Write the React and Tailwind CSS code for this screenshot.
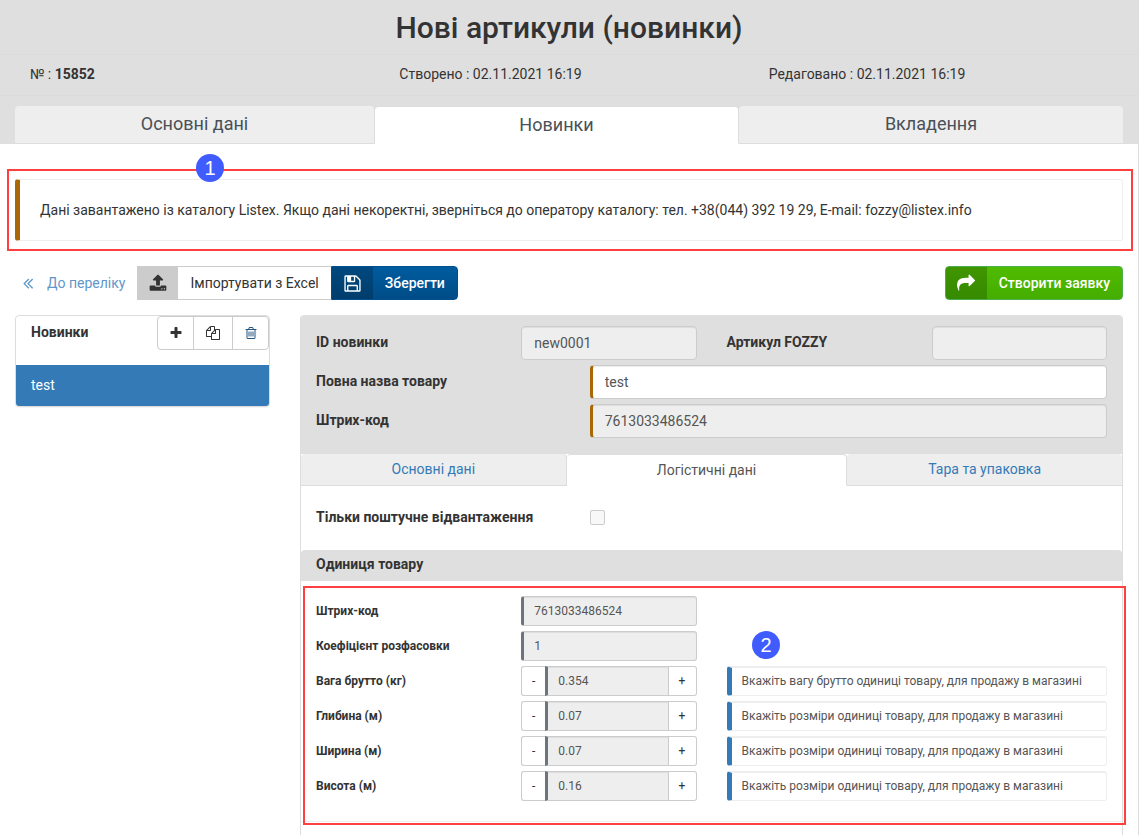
import React from "react";

const icons = {
  back: "M1011 1376q0 13-10 23l-50 50q-10 10-23 10t-23-10l-466-466q-10-10-10-23t10-23l466-466q10-10 23-10t23 10l50 50q10 10 10 23t-10 23l-393 393 393 393q10 10 10 23zm384 0q0 13-10 23l-50 50q-10 10-23 10t-23-10l-466-466q-10-10-10-23t10-23l466-466q10-10 23-10t23 10l50 50q10 10 10 23t-10 23l-393 393 393 393q10 10 10 23z",
  upload:
    "M1344 1472q0-26-19-45t-45-19-45 19-19 45 19 45 45 19 45-19 19-45zm256 0q0-26-19-45t-45-19-45 19-19 45 19 45 45 19 45-19 19-45zm128-224v320q0 40-28 68t-68 28h-1472q-40 0-68-28t-28-68v-320q0-40 28-68t68-28h427q21 56 70.5 92t110.5 36h256q61 0 110.5-36t70.5-92h427q40 0 68 28t28 68zm-325-648q-17 40-59 40h-256v448q0 26-19 45t-45 19h-256q-26 0-45-19t-19-45v-448h-256q-42 0-59-40-17-39 14-69l448-448q18-19 45-19t45 19l448 448q31 30 14 69z",
  save: "M512 1536h768v-384h-768v384zm896 0h128v-896q0-14-10-38.5t-20-34.5l-281-281q-10-10-34-20t-39-10v416q0 40-28 68t-68 28h-576q-40 0-68-28t-28-68v-416h-128v1280h128v-416q0-40 28-68t68-28h832q40 0 68 28t28 68v416zm-384-928v-320q0-13-9.5-22.5t-22.5-9.5h-192q-13 0-22.5 9.5t-9.5 22.5v320q0 13 9.5 22.5t22.5 9.5h192q13 0 22.5-9.5t9.5-22.5zm640 32v928q0 40-28 68t-68 28h-1344q-40 0-68-28t-28-68v-1344q0-40 28-68t68-28h928q40 0 88 20t76 48l280 280q28 28 48 76t20 88z",
  share:
    "M1792 640q0 26-19 45l-512 512q-19 19-45 19t-45-19-19-45v-256h-224q-98 0-175.5 6t-154 21.5-133 42.5-105.5 69.5-80 101-48.5 138.5-17.5 181q0 55 5 123 0 6 2.5 23.5t2.5 26.5q0 15-8.5 25t-23.5 10q-16 0-28-17-7-9-13-22t-13.5-30-10.5-24q-127-285-127-451 0-199 53-333 162-403 875-403h224v-256q0-26 19-45t45-19 45 19l512 512q19 19 19 45z",
  plus: "M1600 736v192q0 40-28 68t-68 28h-416v416q0 40-28 68t-68 28h-192q-40 0-68-28t-28-68v-416h-416q-40 0-68-28t-28-68v-192q0-40 28-68t68-28h416v-416q0-40 28-68t68-28h192q40 0 68 28t28 68v416h416q40 0 68 28t28 68z",
  copy: "M1696 384q40 0 68 28t28 68v1216q0 40-28 68t-68 28h-960q-40 0-68-28t-28-68v-288h-544q-40 0-68-28t-28-68v-672q0-40 20-88t48-76l408-408q28-28 76-48t88-20h416q40 0 68 28t28 68v328q68-40 128-40h416zm-544 213l-299 299h299v-299zm-640-384l-299 299h299v-299zm196 647l316-316v-416h-384v416q0 40-28 68t-68 28h-416v640h512v-256q0-40 20-88t48-76zm956 804v-1152h-384v416q0 40-28 68t-68 28h-416v640h896z",
  trash:
    "M704 736v576q0 14-9 23t-23 9h-64q-14 0-23-9t-9-23v-576q0-14 9-23t23-9h64q14 0 23 9t9 23zm256 0v576q0 14-9 23t-23 9h-64q-14 0-23-9t-9-23v-576q0-14 9-23t23-9h64q14 0 23 9t9 23zm256 0v576q0 14-9 23t-23 9h-64q-14 0-23-9t-9-23v-576q0-14 9-23t23-9h64q14 0 23 9t9 23zm128 724v-948h-896v948q0 22 7 40.5t14.5 27 10.5 8.5h832q3 0 10.5-8.5t14.5-27 7-40.5zm-672-1076h448l-48-117q-7-9-17-11h-317q-10 2-17 11zm928 32v64q0 14-9 23t-23 9h-96v948q0 83-47 143.5t-113 60.5h-832q-66 0-113-58.5t-47-141.5v-952h-96q-14 0-23-9t-9-23v-64q0-14 9-23t23-9h309l70-167q15-37 54-63t79-26h320q40 0 79 26t54 63l70 167h309q14 0 23 9t9 23z",
};

const Icon = ({ name, className }) => (
  <svg
    viewBox="0 0 1792 1792"
    fill="currentColor"
    className={className}
    aria-hidden="true"
  >
    <path d={icons[name]} />
  </svg>
);

const Marker = ({ children, className }) => (
  <span
    className={`absolute z-10 flex size-7 items-center justify-center rounded-full bg-[#405cff] font-['Liberation_Sans',sans-serif] text-xl text-white ${className}`}
  >
    {children}
  </span>
);

const measures = [
  {
    id: "weight",
    label: "Вага брутто (кг)",
    value: "0.354",
    hint: "Вкажіть вагу брутто одиниці товару, для продажу в магазині",
  },
  {
    id: "depth",
    label: "Глибина (м)",
    value: "0.07",
    hint: "Вкажіть розміри одиниці товару, для продажу в магазині",
  },
  {
    id: "width",
    label: "Ширина (м)",
    value: "0.07",
    hint: "Вкажіть розміри одиниці товару, для продажу в магазині",
  },
  {
    id: "height",
    label: "Висота (м)",
    value: "0.16",
    hint: "Вкажіть розміри одиниці товару, для продажу в магазині",
  },
];

const field =
  "block w-full min-w-0 border border-[#ccc] px-3 text-[#555] shadow-[inset_0_1px_1px_rgba(0,0,0,0.075)]";

const PageHeader = () => (
  <header className="bg-[#dfdfdf] pt-px">
    <h1 className="rounded-t border-b border-[#dcdcdc] py-2 text-center text-3xl leading-[37px] font-medium">
      Нові артикули (новинки)
    </h1>
    <div className="grid grid-cols-3 border-b border-[#dcdcdc] px-[15px] pt-[9px] pb-[11px] *:px-[15px]">
      <div>
        № : <b className="font-bold">15852</b>
      </div>
      <div>Створено : 02.11.2021 16:19</div>
      <div>Редаговано : 02.11.2021 16:19</div>
    </div>
    <nav className="grid grid-cols-[360fr_364fr_384fr] px-[15px] pt-[10px] text-lg text-[#495057]">
      <button className="h-[38px] rounded-t border-r border-b border-[#ddd] bg-[#eee] pb-px">
        Основні дані
      </button>
      <button className="h-[38px] rounded-t border-t border-r border-b border-[#ddd] border-b-white bg-white pb-px">
        Новинки
      </button>
      <button className="h-[38px] rounded-t border-b border-[#ddd] bg-[#eee] pb-px">
        Вкладення
      </button>
    </nav>
  </header>
);

const Toolbar = () => (
  <div className="flex">
    <a
      href="#list"
      className="flex h-[34px] items-center pr-3 pl-1 text-[#5f97c8]"
    >
      <Icon name="back" className="mr-[10px] size-[18px]" />
      До переліку
    </a>
    <button className="flex h-[34px] items-center border border-r-0 border-[#ccc]">
      <span className="flex h-full w-10 items-center justify-center bg-[#ccc]">
        <Icon name="upload" className="size-[18px]" />
      </span>
      <span className="px-3">Імпортувати з Excel</span>
    </button>
    <button className="flex h-[34px] items-center overflow-hidden rounded-r border border-[#00508f] bg-linear-to-b from-[#005b9f] to-[#004d87] font-medium text-white">
      <span className="flex h-full w-[41px] items-center justify-center bg-black/20">
        <Icon name="save" className="size-[19px]" />
      </span>
      <span className="px-3">Зберегти</span>
    </button>
    <button className="ml-auto flex h-[34px] items-center overflow-hidden rounded border border-[#4cae4c] bg-linear-to-b from-[#50bb00] to-[#44ad00] font-medium text-white">
      <span className="flex h-full w-[41px] items-center justify-center bg-black/20">
        <Icon name="share" className="size-[18px]" />
      </span>
      <span className="px-3">Створити заявку</span>
    </button>
  </div>
);

const ItemList = () => (
  <section className="rounded border border-[#ddd] shadow-[0_1px_1px_rgba(0,0,0,0.05)]">
    <div className="flex h-[49px] items-start justify-between pl-[15px]">
      <h2 className="py-1.5 font-bold">Новинки</h2>
      <div className="flex h-[34px] rounded border border-[#ccc]">
        <button
          aria-label="Додати"
          className="flex w-9 items-center justify-center border-r border-[#ccc]"
        >
          <Icon name="plus" className="size-[14px]" />
        </button>
        <button
          aria-label="Копіювати"
          className="flex w-[39px] items-center justify-center border-r border-[#ccc]"
        >
          <Icon name="copy" className="size-[14px]" />
        </button>
        <button
          aria-label="Видалити"
          className="flex w-[35px] items-center justify-center text-[#245580]"
        >
          <Icon name="trash" className="size-[14px]" />
        </button>
      </div>
    </div>
    <a
      href="#test"
      className="block rounded-b-[3px] bg-[#337ab7] px-[15px] pt-[10px] pb-[11px] text-white"
    >
      test
    </a>
  </section>
);

const GeneralFields = () => (
  <div className="flex flex-col gap-[5px] rounded-t bg-[#dfdfdf] pt-[11px] pb-4">
    <div className="grid grid-cols-4 *:px-[15px]">
      <label htmlFor="item-id" className="py-1.5 font-bold">
        ID новинки
      </label>
      <div>
        <input
          id="item-id"
          readOnly
          value="new0001"
          className={`${field} h-[34px] rounded bg-[#eee]`}
        />
      </div>
      <label htmlFor="article" className="py-1.5 font-bold">
        Артикул FOZZY
      </label>
      <div>
        <input
          id="article"
          readOnly
          value=""
          className={`${field} h-[34px] rounded bg-[#eee]`}
        />
      </div>
    </div>
    <div className="grid grid-cols-[1fr_2fr] *:px-[15px]">
      <label htmlFor="full-name" className="py-1.5 font-bold">
        Повна назва товару
      </label>
      <div>
        <input
          id="full-name"
          defaultValue="test"
          className={`${field} h-[34px] rounded border-l-3 border-l-[#aa6708] bg-white`}
        />
      </div>
    </div>
    <div className="grid grid-cols-[1fr_2fr] *:px-[15px]">
      <label htmlFor="barcode" className="py-1.5 font-bold">
        Штрих-код
      </label>
      <div>
        <input
          id="barcode"
          readOnly
          value="7613033486524"
          className={`${field} h-[34px] rounded border-l-3 border-l-[#aa6708] bg-[#eee]`}
        />
      </div>
    </div>
  </div>
);

const UnitSection = () => (
  <section className="rounded-t border-b border-[#eee]">
    <h3 className="rounded-t bg-[#dfdfdf] px-[15px] pt-1 pb-[7px] font-bold">
      Одиниця товару
    </h3>
    <div className="relative flex flex-col gap-[5px] pt-[15px] pb-5 text-xs">
      <div className="pointer-events-none absolute top-[5px] -right-1 -bottom-1 left-0.5 border-2 border-[#ff4040]" />
      <Marker className="top-[50px] left-[451px]">2</Marker>
      <div className="grid grid-cols-4 *:px-[15px]">
        <label htmlFor="unit-barcode" className="py-[7px] font-bold">
          Штрих-код
        </label>
        <div>
          <input
            id="unit-barcode"
            readOnly
            value="7613033486524"
            className={`${field} h-[30px] rounded-[3px] border-l-3 border-l-[#6c757d] bg-[#eee] pl-[10px]`}
          />
        </div>
      </div>
      <div className="grid grid-cols-4 *:px-[15px]">
        <label htmlFor="unit-factor" className="py-[7px] font-bold">
          Коефіцієнт розфасовки
        </label>
        <div>
          <input
            id="unit-factor"
            readOnly
            value="1"
            className={`${field} h-[30px] rounded-[3px] border-l-3 border-l-[#6c757d] bg-[#eee] pl-[10px]`}
          />
        </div>
      </div>
      {measures.map((row) => (
        <div key={row.id} className="grid grid-cols-4 *:px-[15px]">
          <label htmlFor={row.id} className="py-[7px] font-bold">
            {row.label}
          </label>
          <div className="flex h-[30px]">
            <button className="w-6 shrink-0 rounded-l-[3px] border border-r-0 border-[#ccc]">
              -
            </button>
            <input
              id={row.id}
              readOnly
              value={row.value}
              className={`${field} border-l-3 border-l-[#6c757d] bg-[#eee] pl-[10px]`}
            />
            <button className="w-7 shrink-0 rounded-r-[3px] border border-l-0 border-[#ccc]">
              +
            </button>
          </div>
          <div className="col-span-2">
            <p className="h-[30px] rounded-[3px] border border-t-2 border-l-5 border-[#eee] border-l-[#337ab7] px-[10px] leading-[26px] text-[#555]">
              {row.hint}
            </p>
          </div>
        </div>
      ))}
    </div>
  </section>
);

const App = () => {
  return (
    <div className="flex min-h-screen flex-col bg-white pr-px font-[Roboto,sans-serif] text-sm text-[#333]">
      <div className="flex grow flex-col border-r border-[#ddd]">
        <PageHeader />
        <main className="flex grow flex-col px-[15px] pt-[35px]">
          <div className="relative mb-[25px]">
            <div className="pointer-events-none absolute -inset-y-[10px] -right-[10px] -left-2 border-2 border-[#ff4040]" />
            <Marker className="-top-[25px] left-[181px]">1</Marker>
            <p className="rounded-[3px] border border-l-5 border-[#eee] border-l-[#aa6708] p-5">
              Дані завантажено із каталогу Listex. Якщо дані некоректні,
              зверніться до оператору каталогу: тел. +38(044) 392 19 29, E-mail:
              fozzy@listex.info
            </p>
          </div>
          <Toolbar />
          <div className="mt-[15px] grid grow grid-cols-[255fr_823fr] gap-x-[30px]">
            <div>
              <ItemList />
            </div>
            <section className="rounded-t border-x border-[#ddd]">
              <GeneralFields />
              <nav className="grid grid-cols-[266fr_281fr_275fr] text-[#337ab7]">
                <button className="h-8 rounded-t border-r border-b border-[#ddd] bg-[#eee] pb-px">
                  Основні дані
                </button>
                <button className="h-8 rounded-t border-t border-r border-b border-[#ddd] border-b-white bg-white pb-px text-[#555]">
                  Логістичні дані
                </button>
                <button className="h-8 rounded-t border-b border-[#ddd] bg-[#eee] pb-px">
                  Тара та упаковка
                </button>
              </nav>
              <div className="grid grid-cols-[1fr_2fr] items-center pt-[15px] pb-[17px] *:mx-[15px]">
                <label htmlFor="piece-only" className="py-1.5 font-bold">
                  Тільки поштучне відвантаження
                </label>
                <input
                  id="piece-only"
                  type="checkbox"
                  disabled
                  className="size-[15px] appearance-none rounded-xs border border-[#ccc] bg-[#f8f8f8]"
                />
              </div>
              <UnitSection />
            </section>
          </div>
        </main>
      </div>
    </div>
  );
};

export default App;
